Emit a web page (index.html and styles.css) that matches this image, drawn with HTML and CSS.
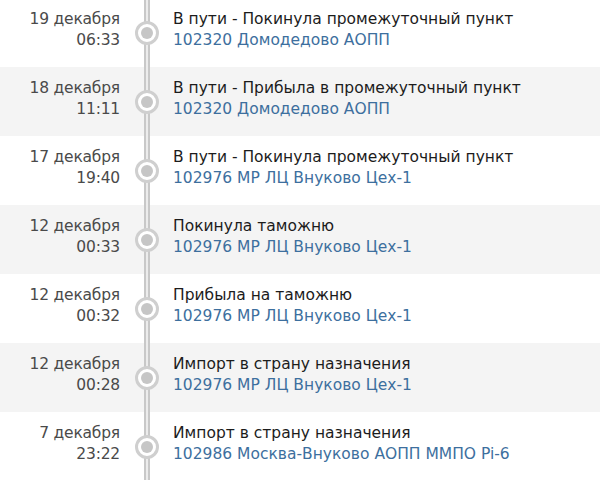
FILE: index.html
```html
<!DOCTYPE html>
<html lang="ru">
<head>
<meta charset="utf-8">
<link rel="stylesheet" href="styles.css">
</head>
<body>
<ul class="track">
  <li class="row">
    <div class="date"><span>19 декабря</span><span>06:33</span></div>
    <div class="mark"><span class="dot"></span></div>
    <div class="info"><span class="status">В пути - Покинула промежуточный пункт</span><a class="place">102320 Домодедово АОПП</a></div>
  </li>
  <li class="row">
    <div class="date"><span>18 декабря</span><span>11:11</span></div>
    <div class="mark"><span class="dot"></span></div>
    <div class="info"><span class="status">В пути - Прибыла в промежуточный пункт</span><a class="place">102320 Домодедово АОПП</a></div>
  </li>
  <li class="row">
    <div class="date"><span>17 декабря</span><span>19:40</span></div>
    <div class="mark"><span class="dot"></span></div>
    <div class="info"><span class="status">В пути - Покинула промежуточный пункт</span><a class="place">102976 МР ЛЦ Внуково Цех-1</a></div>
  </li>
  <li class="row">
    <div class="date"><span>12 декабря</span><span>00:33</span></div>
    <div class="mark"><span class="dot"></span></div>
    <div class="info"><span class="status">Покинула таможню</span><a class="place">102976 МР ЛЦ Внуково Цех-1</a></div>
  </li>
  <li class="row">
    <div class="date"><span>12 декабря</span><span>00:32</span></div>
    <div class="mark"><span class="dot"></span></div>
    <div class="info"><span class="status">Прибыла на таможню</span><a class="place">102976 МР ЛЦ Внуково Цех-1</a></div>
  </li>
  <li class="row">
    <div class="date"><span>12 декабря</span><span>00:28</span></div>
    <div class="mark"><span class="dot"></span></div>
    <div class="info"><span class="status">Импорт в страну назначения</span><a class="place">102976 МР ЛЦ Внуково Цех-1</a></div>
  </li>
  <li class="row">
    <div class="date"><span>7 декабря</span><span>23:22</span></div>
    <div class="mark"><span class="dot"></span></div>
    <div class="info"><span class="status">Импорт в страну назначения</span><a class="place">102986 Москва-Внуково АОПП ММПО Pi-6</a></div>
  </li>
</ul>
</body>
</html>
```

FILE: styles.css
```css
html, body {
  margin: 0;
  padding: 0;
  background: #fff;
}
body {
  font-family: "DejaVu Sans", Verdana, sans-serif;
  font-size: 15.5px;
  overflow: hidden;
}
.track {
  list-style: none;
  margin: -2px 0 0 0;
  padding: 0;
}
.row {
  display: grid;
  grid-template-columns: 120px 53px 1fr;
  height: 69px;
}
.row:nth-child(even) {
  background: #f4f4f4;
}
.date, .info {
  display: flex;
  flex-direction: column;
  justify-content: center;
  line-height: 21px;
  padding-bottom: 5px;
}
.date {
  align-items: flex-end;
  color: #4a4a4a;
  letter-spacing: -0.2px;
}
.status {
  color: #1c1c1c;
}
.place {
  color: #3d6f9e;
}
.mark {
  position: relative;
  display: flex;
  align-items: center;
  justify-content: center;
}
.mark::before {
  content: "";
  position: absolute;
  top: 0;
  bottom: 0;
  left: 50%;
  width: 6px;
  margin-left: -3px;
  box-sizing: border-box;
  border-left: 2px solid #c8c8c8;
  border-right: 2px solid #c8c8c8;
  background: #ececec;
}
.dot {
  position: relative;
  width: 24px;
  height: 24px;
  box-sizing: border-box;
  border: 3px solid #cfcfcf;
  border-radius: 50%;
  background: #fff;
  display: flex;
  align-items: center;
  justify-content: center;
}
.dot::after {
  content: "";
  width: 12px;
  height: 12px;
  border-radius: 50%;
  background: #c6c6c6;
}
```
